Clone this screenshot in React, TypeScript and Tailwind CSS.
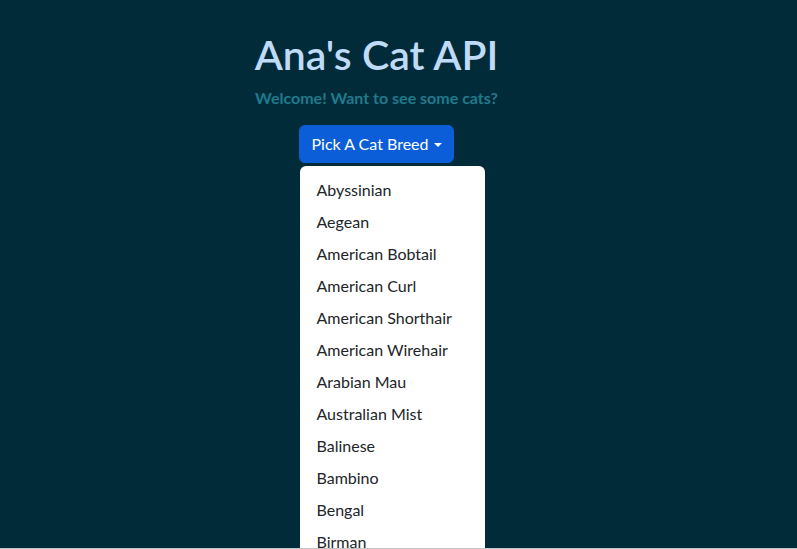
const breeds = [
  "Abyssinian",
  "Aegean",
  "American Bobtail",
  "American Curl",
  "American Shorthair",
  "American Wirehair",
  "Arabian Mau",
  "Australian Mist",
  "Balinese",
  "Bambino",
  "Bengal",
  "Birman",
  "Bombay",
]

export default function App() {
  return (
    <div className="h-[549px] overflow-hidden bg-[#c4c4c4] font-['Lato',sans-serif]">
      <div className="flex h-[548px] flex-col items-center overflow-hidden bg-[#022b3a] pr-[44px]">
        <h1 className="mt-[31px] text-[41px] font-semibold leading-[48px] text-[#bfdbf7]">Ana's Cat API</h1>
        <p className="mt-[7px] text-base font-bold leading-6 text-[#1f7a8c]">Welcome! Want to see some cats?</p>

        <div className="relative mt-[15px] flex flex-col items-start">
          <button className="flex items-center gap-[5px] rounded-[6px] border border-[#0b5ed7] bg-[#0b5ed7] px-[11px] py-[6px] text-base leading-6 text-white">
            Pick A Cat Breed
            <span className="mt-[2px] border-x-[4px] border-t-[4px] border-x-transparent border-t-white" />
          </button>

          <div className="absolute left-[1px] top-[41px] w-[185px] rounded-[6px] bg-white py-2">
            {breeds.map((breed) => (
              <div key={breed} className="px-4 py-1 text-base leading-6 text-[#212529]">
                {breed}
              </div>
            ))}
          </div>
        </div>
      </div>
    </div>
  )
}
